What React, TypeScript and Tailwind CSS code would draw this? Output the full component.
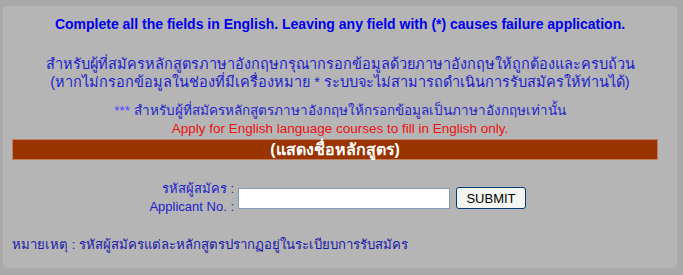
import { useState } from 'react';

// ฟอร์มกรอกรหัสผู้สมัคร
export default function App() {
  const [applicantNo, setApplicantNo] = useState('');

  return (
    <div
      className="w-[683px] h-[275px] bg-[#a9a9a9] pt-[6px] pl-[3px]"
      style={{ fontFamily: '"Liberation Sans", Tahoma, sans-serif' }}
    >
      <div className="w-[674px] h-[262px] bg-[#b5b5b5] rounded-[4px] pt-[8px]">
        <p className="text-center text-[14px] font-bold text-[#0000ee] leading-[20px]">
          Complete all the fields in English. Leaving any field with (*) causes failure application.
        </p>

        <div className="mt-[21px] text-center text-[14.5px] text-[#1d1dcc] leading-[18px]">
          <p>สำหรับผู้ที่สมัครหลักสูตรภาษาอังกฤษกรุณากรอกข้อมูลด้วยภาษาอังกฤษให้ถูกต้องและครบถ้วน</p>
          <p>(หากไม่กรอกข้อมูลในช่องที่มีเครื่องหมาย * ระบบจะไม่สามารถดำเนินการรับสมัครให้ท่านได้)</p>
        </div>

        <div className="mt-[11px] text-center text-[13.5px] leading-[18px]">
          <p className="text-[#2525cc]">
            <span className="text-[#4444ff]">***</span> สำหรับผู้ที่สมัครหลักสูตรภาษาอังกฤษให้กรอกข้อมูลเป็นภาษาอังกฤษเท่านั้น
          </p>
          <p className="text-[#ee1111]">Apply for English language courses to fill in English only.</p>
        </div>

        <div className="mx-[9px] mt-[1px] w-[646px] h-[21px] bg-[#993300] border border-[#c08060] flex items-center justify-center">
          <span className="text-white font-bold text-[16px] leading-none">(แสดงชื่อหลักสูตร)</span>
        </div>

        <div className="mt-[20px] flex items-center">
          <div className="w-[231px] text-right text-[13px] leading-[18px] text-[#2222cc]">
            <p>รหัสผู้สมัคร :</p>
            <p>Applicant No. :</p>
          </div>
          <input
            value={applicantNo}
            onChange={(e) => setApplicantNo(e.target.value)}
            className="ml-[4px] w-[212px] h-[21px] bg-white border border-[#7f9db9] px-1 text-[13px] outline-none"
          />
          <button className="ml-[6px] w-[70px] h-[22px] bg-[#f4f4f0] border border-[#003c74] rounded-[3px] text-[13px] text-black leading-none">
            SUBMIT
          </button>
        </div>

        <p className="mt-[20px] pl-[9px] text-[13.2px] leading-[18px] text-[#1a1aaa]">
          หมายเหตุ : รหัสผู้สมัครแต่ละหลักสูตรปรากฏอยู่ในระเบียบการรับสมัคร
        </p>
      </div>
    </div>
  );
}
